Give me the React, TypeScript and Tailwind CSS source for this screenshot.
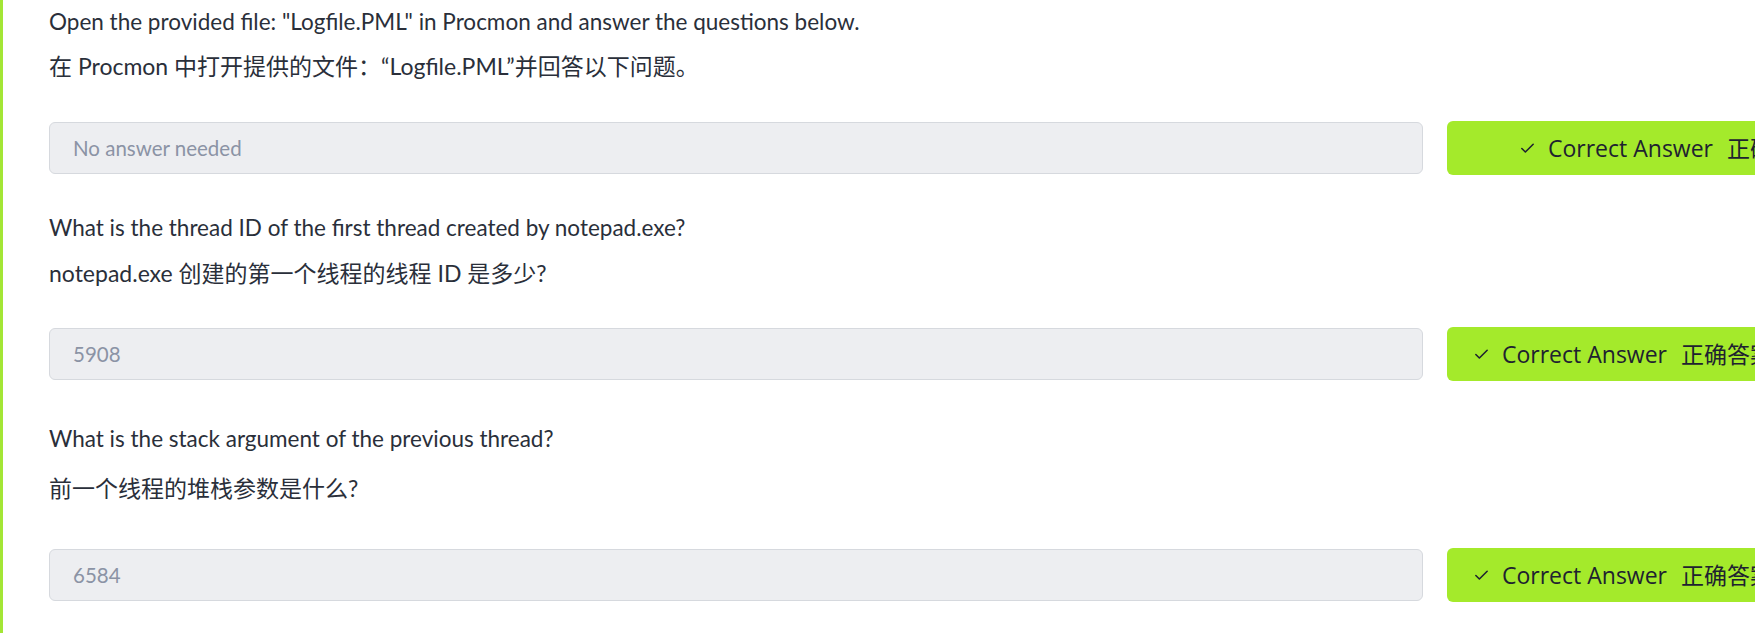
import React from 'react';
import { Check } from 'lucide-react';

const textFont = { fontFamily: 'Lato, "Noto Sans CJK SC", sans-serif' };

const questions = [
  {
    en: 'Open the provided file: "Logfile.PML" in Procmon and answer the questions below.',
    zh: '在 Procmon 中打开提供的文件：“Logfile.PML”并回答以下问题。',
    answer: 'No answer needed',
    top: 'pt-[5px]',
    zhClass: 'mt-[12px] leading-[33px]',
    inputGap: 'mt-[38px]',
    btnPad: 'pl-[72px]',
  },
  {
    en: 'What is the thread ID of the first thread created by notepad.exe?',
    zh: 'notepad.exe 创建的第一个线程的线程 ID 是多少?',
    answer: '5908',
    top: 'pt-[36px]',
    zhClass: 'mt-[13px] leading-[33px]',
    inputGap: 'mt-[37px]',
    btnPad: 'pl-[26px]',
  },
  {
    en: 'What is the stack argument of the previous thread?',
    zh: '前一个线程的堆栈参数是什么?',
    answer: '6584',
    top: 'pt-[41px]',
    zhClass: 'mt-[15px] leading-[36px]',
    inputGap: 'mt-[42px]',
    btnPad: 'pl-[26px]',
  },
];

const App = () => {
  return (
    <div className="w-[1755px] h-[633px] bg-white flex overflow-hidden">
      <div className="w-[3px] shrink-0 bg-[#a3e635]" />
      <div className="flex-1 pl-[46px]">
        {questions.map((q, i) => (
          <div key={i} className={q.top}>
            <p className="text-[22.5px] leading-[33px] text-[#2a2f3a] whitespace-nowrap" style={textFont}>
              {q.en}
            </p>
            <p className={`${q.zhClass} text-[23px] text-[#2a2f3a] whitespace-nowrap`} style={textFont}>
              {q.zh}
            </p>
            <div className={`${q.inputGap} flex items-center gap-[24px]`}>
              <div
                className="w-[1374px] h-[52px] shrink-0 flex items-center px-[23px] bg-[#edeef1] border border-[#d6d9de] rounded-[6px] text-[20.5px] text-[#8b93a5]"
                style={textFont}
              >
                {q.answer}
              </div>
              <button
                className={`w-[330px] h-[54px] shrink-0 flex items-center ${q.btnPad} bg-[#a4ea2b] rounded-[6px] text-[#1e2230] text-[23px] whitespace-nowrap`}
                style={{ fontFamily: '"Open Sans", "Noto Sans CJK SC", sans-serif' }}
              >
                <Check size={17} strokeWidth={2.2} className="shrink-0" />
                <span className="ml-[12px] shrink-0">Correct Answer</span>
                <span className="ml-[14px] shrink-0">正确答案</span>
              </button>
            </div>
          </div>
        ))}
      </div>
    </div>
  );
};

export default App;
